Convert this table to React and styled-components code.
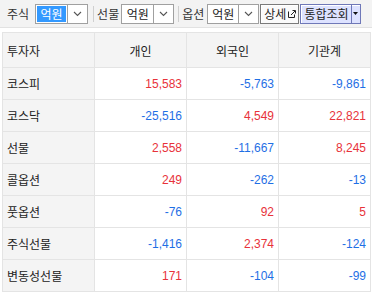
import styled, { createGlobalStyle } from "styled-components";

const GlobalStyle = createGlobalStyle`
  body {
    margin: 0;
    background: #fff;
    font-family: "Liberation Sans", "Noto Sans CJK KR", sans-serif;
    color: #222;
  }
`;

const Wrap = styled.div`
  width: 372px;
  height: 294px;
  overflow: hidden;
`;

const Toolbar = styled.div`
  display: flex;
  align-items: center;
  height: 27px;
  background: #f3f3f3;
  border-bottom: 1px solid #e2e2e2;
  padding-left: ${(p) => p.$pad}px;
  font-size: 12px;
`;

const Label = styled.span`
  color: #333;
  margin-right: ${(p) => p.$gap}px;
  white-space: nowrap;
`;

const SelectBox = styled.div`
  display: flex;
  width: ${(p) => p.$w}px;
  height: 20px;
  box-sizing: border-box;
  border: 1px solid #a0a0a0;
  background: #fff;
`;

const SelectValue = styled.div`
  flex: 1;
  display: flex;
  align-items: center;
  padding: 1px;
`;

const SelectText = styled.span`
  display: flex;
  align-items: center;
  justify-content: center;
  flex: 1;
  height: 100%;
  background: ${(p) => (p.$active ? "#3399ff" : "transparent")};
  color: ${(p) => (p.$active ? "#fff" : "#222")};
`;

const SelectArrow = styled.div`
  width: 19px;
  display: flex;
  align-items: center;
  justify-content: center;
  border-left: 1px solid #a0a0a0;
`;

const Sep = styled.div`
  width: 1px;
  height: 16px;
  background: #cfcfcf;
  margin: 0 ${(p) => p.$r}px 0 ${(p) => p.$l}px;
`;

const Button = styled.div`
  display: flex;
  align-items: center;
  height: 20px;
  box-sizing: border-box;
  margin-left: ${(p) => p.$ml}px;
  border: 1px solid ${(p) => (p.$primary ? "#6f78b8" : "#7a7a7a")};
  background: ${(p) => (p.$primary ? "#dde2ff" : "#fafafa")};
  box-shadow: inset 1px 1px 0 #fff;
  color: #222;
  white-space: nowrap;
`;

const ButtonText = styled.span`
  padding: 0 ${(p) => p.$pr}px 0 3px;
  display: flex;
  align-items: center;
  gap: 2px;
`;

const ButtonDrop = styled.span`
  display: flex;
  align-items: center;
  justify-content: center;
  width: 8px;
  height: 100%;
  border-left: 1px solid #6f78b8;
`;

const Table = styled.table`
  margin: 4px 0 0 2px;
  width: 369px;
  border-collapse: collapse;
  border: 1px solid #d6d6d6;
  font-size: 12px;
  table-layout: fixed;
`;

const Th = styled.th`
  height: 34px;
  padding: 0;
  font-weight: normal;
  background: #f4f4f4;
  border: 1px solid #e4e4e4;
  text-align: ${(p) => (p.$left ? "left" : "center")};
  padding-left: ${(p) => (p.$left ? "4px" : "0")};
  color: #222;
`;

const RowHead = styled.td`
  height: 31px;
  padding: 0 0 0 4px;
  background: #f4f4f4;
  border: 1px solid #e4e4e4;
  color: #222;
`;

const Cell = styled.td`
  height: 31px;
  padding: 0 4px 0 0;
  text-align: right;
  border: 1px solid #e4e4e4;
  color: ${(p) => (p.$neg ? "#1f6fe5" : "#e8323a")};
`;

const Chevron = () => (
  <svg width="9" height="6" viewBox="0 0 9 6">
    <path d="M1 1 L4.5 4.5 L8 1" fill="none" stroke="#555" strokeWidth="1.1" />
  </svg>
);

const ExtIcon = () => (
  <svg width="8" height="8" viewBox="0 0 8 8">
    <path d="M0.5 1.5 V7.5 H6.5 V4.5" fill="none" stroke="#222" />
    <path d="M3 5 L7 1 M4.5 0.5 H7.5 V3.5" fill="none" stroke="#222" />
  </svg>
);

const Select = ({ value, active, w }) => (
  <SelectBox $w={w}>
    <SelectValue>
      <SelectText $active={active}>{value}</SelectText>
    </SelectValue>
    <SelectArrow>
      <Chevron />
    </SelectArrow>
  </SelectBox>
);

const rows = [
  ["코스피", 15583, -5763, -9861],
  ["코스닥", -25516, 4549, 22821],
  ["선물", 2558, -11667, 8245],
  ["콜옵션", 249, -262, -13],
  ["풋옵션", -76, 92, 5],
  ["주식선물", -1416, 2374, -124],
  ["변동성선물", 171, -104, -99],
];

const fmt = (n) => n.toLocaleString("en-US");

export default function App() {
  return (
    <Wrap>
      <GlobalStyle />
      <Toolbar $pad={7}>
        <Label $gap={6}>주식</Label>
        <Select value="억원" active w={53} />
        <Sep $l={5} $r={3} />
        <Label $gap={2}>선물</Label>
        <Select value="억원" w={53} />
        <Sep $l={4} $r={3} />
        <Label $gap={3}>옵션</Label>
        <Select value="억원" w={52} />
        <Button $ml={1}>
          <ButtonText $pr={2}>
            상세
            <ExtIcon />
          </ButtonText>
        </Button>
        <Button $ml={1} $primary>
          <ButtonText $pr={2}>통합조회</ButtonText>
          <ButtonDrop>
            <svg width="5" height="3" viewBox="0 0 5 3">
              <path d="M0 0 H5 L2.5 3 Z" fill="#111" />
            </svg>
          </ButtonDrop>
        </Button>
      </Toolbar>
      <Table>
        <thead>
          <tr>
            <Th $left>투자자</Th>
            <Th>개인</Th>
            <Th>외국인</Th>
            <Th>기관계</Th>
          </tr>
        </thead>
        <tbody>
          {rows.map(([name, a, b, c]) => (
            <tr key={name}>
              <RowHead>{name}</RowHead>
              <Cell $neg={a < 0}>{fmt(a)}</Cell>
              <Cell $neg={b < 0}>{fmt(b)}</Cell>
              <Cell $neg={c < 0}>{fmt(c)}</Cell>
            </tr>
          ))}
        </tbody>
      </Table>
    </Wrap>
  );
}
